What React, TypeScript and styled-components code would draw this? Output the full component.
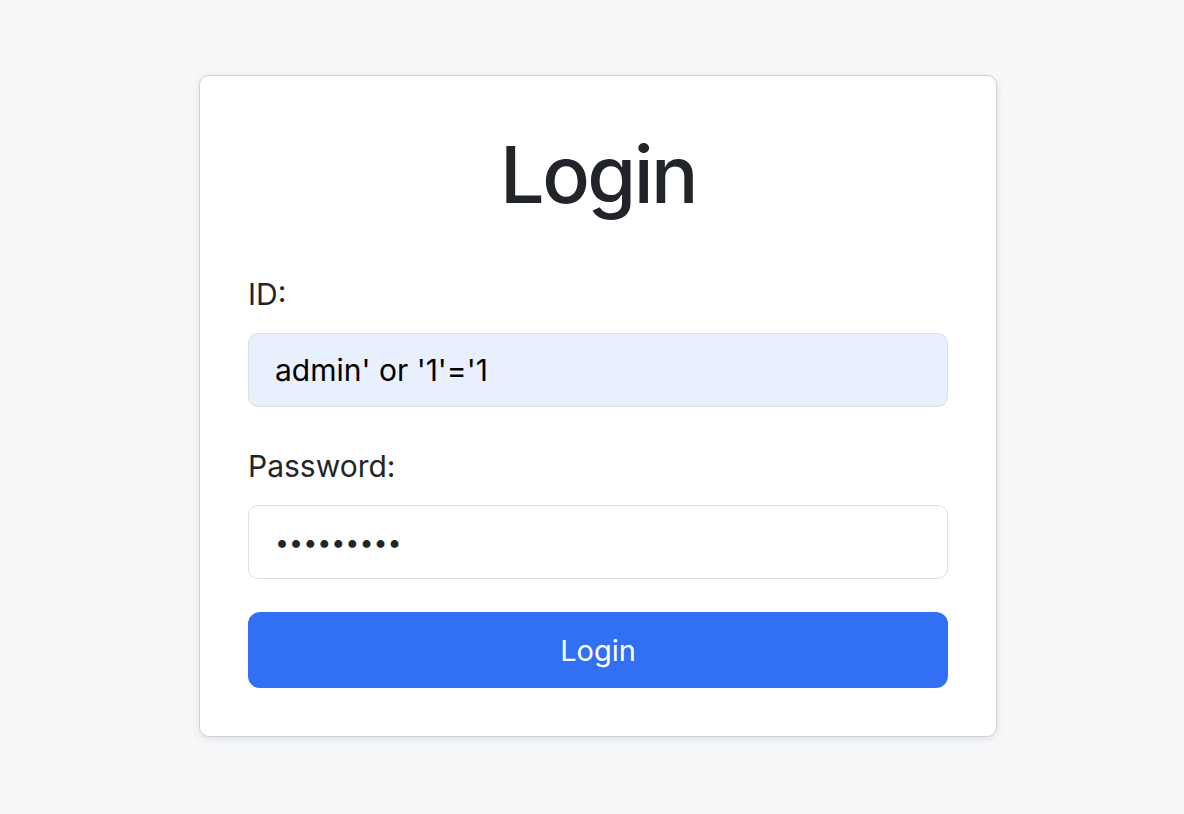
import React, { useState } from "react";
import styled, { createGlobalStyle } from "styled-components";

const GlobalStyle = createGlobalStyle`
  html, body {
    margin: 0;
    padding: 0;
    background: #f7f8fa;
    font-family: Inter, "Noto Sans", "Liberation Sans", sans-serif;
    color: #212529;
  }
  * {
    box-sizing: border-box;
  }
`;

const Page = styled.div`
  min-height: 814px;
  display: flex;
  justify-content: center;
  align-items: flex-start;
  padding: 75px 0 0 12px;
`;

const Card = styled.form`
  width: 798px;
  background: #ffffff;
  border: 1px solid #cfd2d5;
  border-radius: 10px;
  box-shadow: 0 2px 8px rgba(0, 0, 0, 0.1);
  padding: 50px 48px 48px;
  display: flex;
  flex-direction: column;
`;

const Title = styled.h1`
  margin: 0 0 50px;
  font-size: 79px;
  line-height: 96px;
  font-weight: 500;
  letter-spacing: -2.6px;
  text-align: center;
  color: #212529;
`;

const Label = styled.label`
  display: block;
  font-size: 30px;
  line-height: 45px;
  font-weight: 400;
  color: #212529;
  margin-bottom: 16px;
`;

const Field = styled.div<{ $last?: boolean }>`
  display: flex;
  flex-direction: column;
  margin-bottom: ${(p) => (p.$last ? "33px" : "37px")};
`;

const Input = styled.input<{ $filled?: boolean; $secret?: boolean }>`
  height: 74px;
  width: 100%;
  padding: 0 26px;
  font-family: inherit;
  font-size: ${(p) => (p.$secret ? "25px" : "30px")};
  color: ${(p) => (p.$secret ? "#212529" : "#000000")};
  background: ${(p) => (p.$filled ? "#e8f0fe" : "#ffffff")};
  border: 1.5px solid #dcdfe3;
  border-radius: 10px;
  outline: none;
`;

const Button = styled.button`
  height: 76px;
  width: 100%;
  border: none;
  border-radius: 12px;
  background: #316ff4;
  color: #ffffff;
  font-family: inherit;
  font-size: 29px;
  font-weight: 400;
  cursor: pointer;
`;

export default function App() {
  const [id, setId] = useState("admin' or '1'='1");
  const [password, setPassword] = useState("123456789");

  return (
    <>
      <GlobalStyle />
      <Page>
        <Card onSubmit={(e) => e.preventDefault()}>
          <Title>Login</Title>
          <Field>
            <Label htmlFor="id">ID:</Label>
            <Input
              id="id"
              $filled
              value={id}
              onChange={(e) => setId(e.target.value)}
            />
          </Field>
          <Field $last>
            <Label htmlFor="password">Password:</Label>
            <Input
              id="password"
              type="password"
              $secret
              value={password}
              onChange={(e) => setPassword(e.target.value)}
            />
          </Field>
          <Button type="submit">Login</Button>
        </Card>
      </Page>
    </>
  );
}
